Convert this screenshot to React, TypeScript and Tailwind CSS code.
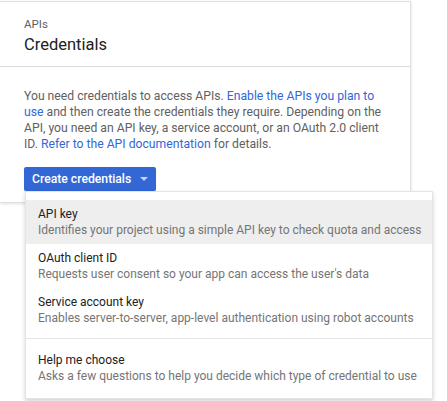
import { useState } from "react";

type MenuItemType = {
    title: string;
    desc: string;
};

const items: MenuItemType[] = [
    {
        title: "API key",
        desc: "Identifies your project using a simple API key to check quota and access",
    },
    {
        title: "OAuth client ID",
        desc: "Requests user consent so your app can access the user's data",
    },
    {
        title: "Service account key",
        desc: "Enables server-to-server, app-level authentication using robot accounts",
    },
];

export default function App() {
    const [hovered, setHovered] = useState(0);

    return (
        <div
            className="relative w-[447px] h-[401px] bg-white overflow-hidden"
            style={{ fontFamily: "Roboto, 'Liberation Sans', sans-serif" }}
        >
            {/* card */}
            <div className="mt-px w-[411px] bg-white border-t border-r border-b border-[#e0e0e0] shadow-[0_1px_3px_rgba(0,0,0,0.12)]">
                <div className="px-6 pt-[15px] h-[65px] border-b border-[#dadada]">
                    <div className="text-[11.5px] leading-[14px] text-[#616161]">APIs</div>
                    <div className="text-[16.5px] leading-[22px] text-[#212121] mt-[3px]">
                        Credentials
                    </div>
                </div>

                <div className="px-6 pt-[21px] pb-[11px]">
                    <p className="text-[12.2px] leading-[16px] text-[#616161] w-[370px]">
                        You need credentials to access APIs.{" "}
                        <a className="text-[#3367d6]">Enable the APIs you plan to use</a> and then
                        create the credentials they require. Depending on the API, you need an API
                        key, a service account, or an OAuth 2.0 client ID.{" "}
                        <a className="text-[#3367d6]">Refer to the API documentation</a> for details.
                    </p>

                    <button className="mt-[15px] h-[24px] w-[132px] flex items-center pl-[8px] rounded-[2px] bg-[#3367d6] text-white text-[12.2px] font-medium shadow-[0_1px_1px_rgba(0,0,0,0.2)]">
                        Create credentials
                        <svg width="8" height="4" viewBox="0 0 8 4" className="ml-[9px]">
                            <path d="M0 0 L8 0 L4 4 Z" fill="#c5d4f5" />
                        </svg>
                    </button>
                </div>
            </div>

            {/* dropdown menu */}
            <div className="absolute left-[25px] top-[191px] w-[408px] bg-white border border-[#e4e4e4] shadow-[0_2px_4px_rgba(0,0,0,0.18)] py-[8px]">
                {items.map((item, i) => (
                    <div
                        key={item.title}
                        onMouseEnter={() => setHovered(i)}
                        className={
                            "px-3 py-[6px] " + (hovered === i ? "bg-[#eeeeee]" : "bg-white")
                        }
                    >
                        <div className="text-[12px] leading-[16px] text-[#212121]">
                            {item.title}
                        </div>
                        <div className="text-[12px] leading-[16px] text-[#757575] whitespace-nowrap">
                            {item.desc}
                        </div>
                    </div>
                ))}

                <div className="my-[6px] border-t border-[#e4e4e4]" />

                <div className="px-3 py-[6px] pt-[7px]">
                    <div className="text-[12px] leading-[16px] text-[#212121]">Help me choose</div>
                    <div className="text-[12px] leading-[16px] text-[#757575] whitespace-nowrap">
                        Asks a few questions to help you decide which type of credential to use
                    </div>
                </div>
            </div>
        </div>
    );
}
